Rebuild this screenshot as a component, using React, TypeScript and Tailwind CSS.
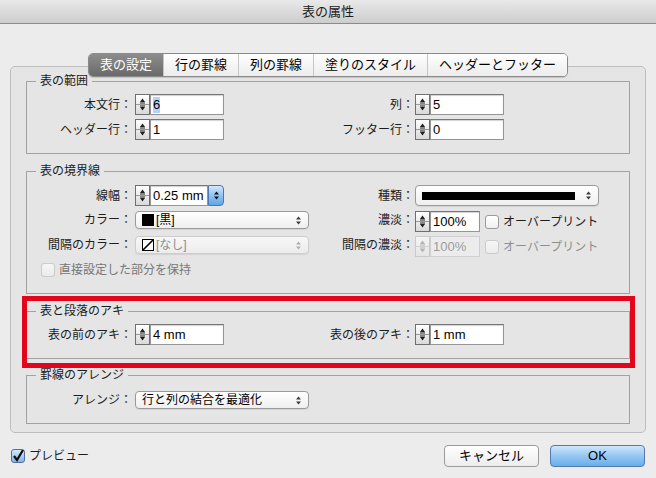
import type { ReactNode } from "react";

const tabs = ["表の設定", "行の罫線", "列の罫線", "塗りのスタイル", "ヘッダーとフッター"];

function Arrows({ color = "#2b2b2b" }: { color?: string }) {
  return (
    <svg width="7" height="11" viewBox="0 0 7 11" className="shrink-0">
      <path d="M1 4.5 L3.5 1.5 L6 4.5 Z" fill={color} />
      <path d="M1 6.5 L3.5 9.5 L6 6.5 Z" fill={color} />
    </svg>
  );
}

function Stepper({ disabled = false }: { disabled?: boolean }) {
  const ink = disabled ? "#b4b4b4" : "#1e1e1e";
  return (
    <div
      className={`w-[15px] h-[21px] shrink-0 border ${
        disabled ? "border-[#cacaca] from-[#f4f4f4] to-[#e6e6e6]" : "border-[#6f6f6f] from-white to-[#d9d9d9]"
      } bg-gradient-to-b`}
    >
      <svg width="13" height="19" viewBox="0 0 13 19">
        <path d="M4 7 L6.5 3.5 L9 7 Z" fill={ink} />
        <line x1="4" y1="8" x2="9" y2="8" stroke={ink} strokeWidth="1" />
        <line x1="0" y1="9.5" x2="13" y2="9.5" stroke={disabled ? "#d0d0d0" : "#9a9a9a"} strokeWidth="1" />
        <line x1="4" y1="11" x2="9" y2="11" stroke={ink} strokeWidth="1" />
        <path d="M4 12 L6.5 15.5 L9 12 Z" fill={ink} />
      </svg>
    </div>
  );
}

function NumField({ value, w, selected = false, disabled = false }: { value: string; w: string; selected?: boolean; disabled?: boolean }) {
  return (
    <div className="flex items-center">
      <Stepper disabled={disabled} />
      <div
        className={`${w} h-[21px] border flex items-center pl-[2px] text-[13px] ${
          disabled
            ? "border-[#cfcfcf] bg-[#ececec] text-[#9c9c9c]"
            : "border-[#959595] border-t-[#767676] bg-white text-black shadow-[inset_0_1px_1px_rgba(0,0,0,0.18)]"
        }`}
      >
        <span className={selected ? "bg-[#b3d3fb] leading-[16px]" : "leading-[16px]"}>{value}</span>
      </div>
    </div>
  );
}

function Popup({ w, h, disabled = false, children }: { w: string; h: string; disabled?: boolean; children?: ReactNode }) {
  return (
    <div
      className={`${w} ${h} rounded-[4px] border flex items-center pl-[6px] pr-[6px] bg-gradient-to-b shadow-[0_1px_1px_rgba(0,0,0,0.08)] ${
        disabled ? "border-[#cdcdcd] from-[#f7f7f7] to-[#ececec] text-[#8e8e8e]" : "border-[#9a9a9a] from-white to-[#efefef] text-black"
      }`}
    >
      <div className="flex-1 flex items-center gap-[2px] text-[12px]">{children}</div>
      <Arrows color={disabled ? "#b0b0b0" : "#3a3a3a"} />
    </div>
  );
}

function Check({ disabled = false }: { disabled?: boolean }) {
  return (
    <div
      className={`w-[14px] h-[14px] shrink-0 rounded-[3px] border bg-gradient-to-b ${
        disabled ? "border-[#cbcbcb] from-[#f6f6f6] to-[#ececec]" : "border-[#9b9b9b] from-white to-[#f0f0f0]"
      }`}
    />
  );
}

function Label({ text, w }: { text: string; w: string }) {
  return <span className={`${w} shrink-0 text-right text-[12px] text-[#1c1c1c] whitespace-nowrap`}>{text}：</span>;
}

function Group({ title, h, children }: { title: string; h: string; children: ReactNode }) {
  return (
    <div className={`${h} border border-[#a2a2a2]`}>
      <div className="-mt-[9px] ml-[9px] w-fit px-[4px] bg-[#e5e5e5] text-[12px] leading-[16px] text-[#1c1c1c]">{title}</div>
      {children}
    </div>
  );
}

export default function App() {
  return (
    <div className="w-[656px] h-[478px] bg-[#ececec] font-['Liberation_Sans','Noto_Sans_CJK_JP',sans-serif] text-[#1c1c1c] overflow-hidden">
      <div className="h-[24px] border-b border-[#8b8b8b] bg-gradient-to-b from-[#e9e9e9] to-[#cdcdcd] text-center text-[13px] leading-[23px]">
        表の属性
      </div>

      <div className="px-[10px] pt-[29px]">
        <div className="relative z-10 flex justify-center h-[24px]">
          <div className="flex rounded-[5px] border border-[#8a8a8a] overflow-hidden shadow-[0_1px_1px_rgba(0,0,0,0.15)]">
            {tabs.map((t, i) => (
              <div
                key={t}
                className={`px-[11px] text-[13px] leading-[22px] ${
                  i === 0
                    ? "bg-gradient-to-b from-[#8d8d8d] to-[#6a6a6a] text-white"
                    : "bg-gradient-to-b from-white to-[#ececec] text-black border-l border-[#c6c6c6]"
                }`}
              >
                {t}
              </div>
            ))}
          </div>
        </div>

        <div className="relative -mt-[11px] h-[367px] rounded-[5px] border border-[#bdbdbd] bg-[#e5e5e5] px-[15px] pt-[14px]">
          <Group title="表の範囲" h="h-[73px]">
            <div className="mt-[5px] flex flex-col gap-[4px]">
              <div className="flex h-[21px] items-center">
                <div className="w-[300px] flex items-center">
                  <Label text="本文行" w="w-[105px]" />
                  <div className="ml-[3px]"><NumField value="6" w="w-[74px]" selected /></div>
                </div>
                <Label text="列" w="w-[87px]" />
                <div className="ml-[1px]"><NumField value="5" w="w-[74px]" /></div>
              </div>
              <div className="flex h-[21px] items-center">
                <div className="w-[300px] flex items-center">
                  <Label text="ヘッダー行" w="w-[105px]" />
                  <div className="ml-[3px]"><NumField value="1" w="w-[74px]" /></div>
                </div>
                <Label text="フッター行" w="w-[87px]" />
                <div className="ml-[1px]"><NumField value="0" w="w-[74px]" /></div>
              </div>
            </div>
          </Group>

          <div className="mt-[17px]">
            <Group title="表の境界線" h="h-[123px]">
              <div className="mt-[6px] flex flex-col">
                <div className="flex h-[21px] items-center">
                  <div className="w-[300px] flex items-center">
                    <Label text="線幅" w="w-[105px]" />
                    <div className="ml-[3px] flex items-center">
                      <NumField value="0.25 mm" w="w-[58px]" />
                      <div className="w-[16px] h-[21px] rounded-r-[4px] border border-[#4c77b1] bg-gradient-to-b from-[#d3e7fb] via-[#8fc2f2] to-[#5ea6ea] flex items-center justify-center">
                        <Arrows color="#111" />
                      </div>
                    </div>
                  </div>
                  <Label text="種類" w="w-[87px]" />
                  <div className="ml-[1px]">
                    <Popup w="w-[184px]" h="h-[21px]">
                      <div className="w-[153px] h-[8px] bg-black" />
                    </Popup>
                  </div>
                </div>

                <div className="mt-[5px] flex h-[20px] items-start">
                  <div className="w-[300px] flex items-center">
                    <Label text="カラー" w="w-[105px]" />
                    <div className="ml-[3px]">
                      <Popup w="w-[174px]" h="h-[18px]">
                        <div className="w-[12px] h-[12px] bg-black" />
                        <span>[黒]</span>
                      </Popup>
                    </div>
                  </div>
                  <Label text="濃淡" w="w-[87px]" />
                  <div className="ml-[1px] flex items-center">
                    <NumField value="100%" w="w-[50px]" />
                    <div className="ml-[5px] flex items-center gap-[4px]">
                      <Check />
                      <span className="text-[12px]">オーバープリント</span>
                    </div>
                  </div>
                </div>

                <div className="mt-[5px] flex h-[20px] items-start">
                  <div className="w-[300px] flex items-center">
                    <Label text="間隔のカラー" w="w-[105px]" />
                    <div className="ml-[3px]">
                      <Popup w="w-[174px]" h="h-[18px]" disabled>
                        <svg width="12" height="12" viewBox="0 0 12 12" className="shrink-0">
                          <rect x="0.5" y="0.5" width="11" height="11" fill="#fff" stroke="#000" />
                          <line x1="1" y1="11" x2="11" y2="1" stroke="#000" strokeWidth="1.6" />
                        </svg>
                        <span>[なし]</span>
                      </Popup>
                    </div>
                  </div>
                  <Label text="間隔の濃淡" w="w-[87px]" />
                  <div className="ml-[1px] flex items-center">
                    <NumField value="100%" w="w-[50px]" disabled />
                    <div className="ml-[5px] flex items-center gap-[4px]">
                      <Check disabled />
                      <span className="text-[12px] text-[#8f8f8f]">オーバープリント</span>
                    </div>
                  </div>
                </div>

                <div className="mt-[6px] ml-[14px] flex h-[15px] items-center gap-[4px]">
                  <Check disabled />
                  <span className="text-[12px] text-[#777]">直接設定した部分を保持</span>
                </div>
              </div>
            </Group>
          </div>

          <div className="mt-[17px]">
            <Group title="表と段落のアキ" h="h-[48px]">
              <div className="mt-[5px] flex h-[21px] items-center">
                <div className="w-[300px] flex items-center">
                  <Label text="表の前のアキ" w="w-[105px]" />
                  <div className="ml-[3px]"><NumField value="4 mm" w="w-[74px]" /></div>
                </div>
                <Label text="表の後のアキ" w="w-[87px]" />
                <div className="ml-[1px]"><NumField value="1 mm" w="w-[74px]" /></div>
              </div>
            </Group>
          </div>

          <div className="mt-[16px]">
            <Group title="罫線のアレンジ" h="h-[49px]">
              <div className="mt-[8px] flex h-[18px] items-center">
                <Label text="アレンジ" w="w-[105px]" />
                <div className="ml-[3px]">
                  <Popup w="w-[174px]" h="h-[18px]">
                    <span>行と列の結合を最適化</span>
                  </Popup>
                </div>
              </div>
            </Group>
          </div>

          <div className="pointer-events-none absolute left-[11px] top-[229px] w-[613px] h-[72px] border-[5px] border-[#e3051b]" />
        </div>

        <div className="mt-[12px] flex h-[22px] items-center justify-between px-[1px]">
          <div className="flex items-center gap-[4px]">
            <div className="w-[14px] h-[14px] rounded-[3px] border border-[#52709e] bg-gradient-to-b from-[#d6e9fb] to-[#7fb5ea] flex items-center justify-center">
              <svg width="12" height="12" viewBox="0 0 12 12">
                <path d="M2 6 L5 10 L11 0" fill="none" stroke="#111" strokeWidth="2.2" />
              </svg>
            </div>
            <span className="text-[12px]">プレビュー</span>
          </div>
          <div className="flex items-center gap-[11px]">
            <div className="w-[95px] h-[22px] rounded-[4px] border border-[#9a9a9a] bg-gradient-to-b from-white to-[#ececec] text-center text-[13px] leading-[20px] text-black">
              キャンセル
            </div>
            <div className="w-[95px] h-[22px] rounded-[4px] border border-[#5778ab] bg-gradient-to-b from-[#cfe6fb] via-[#94c7f3] to-[#69adec] text-center text-[13px] leading-[20px] text-black">
              OK
            </div>
          </div>
        </div>
      </div>
    </div>
  );
}
